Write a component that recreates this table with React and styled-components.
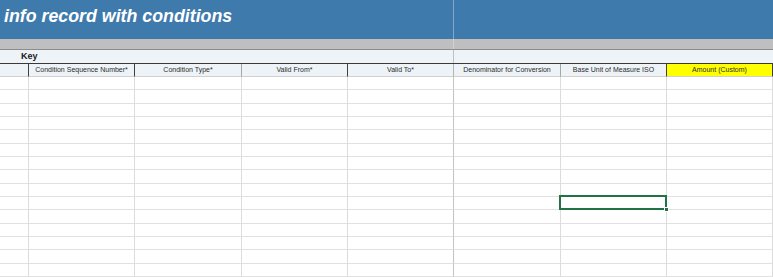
import React from "react";
import styled, { createGlobalStyle, css } from "styled-components";

const Global = createGlobalStyle`
  *, *::before, *::after { box-sizing: border-box; }
  html, body { margin: 0; padding: 0; background: #ffffff; }
  body { font-family: "Liberation Sans", Arial, sans-serif; }
`;

const COLS = "29px 106px 107px 106px 106px 107px 106px 106px";

const Sheet = styled.div`
  width: 773px;
  height: 277px;
  overflow: hidden;
  background: #ffffff;
`;

const Split = styled.div`
  display: grid;
  grid-template-columns: 454px 1fr;
  height: ${(p) => p.$h}px;
  background: ${(p) => p.$bg};
  border-bottom: ${(p) => (p.$bottom ? `1px solid ${p.$bottom}` : "none")};
`;

const Pane = styled.div`
  border-right: ${(p) => (p.$divider ? `1px solid ${p.$divider}` : "none")};
  min-width: 0;
  white-space: nowrap;
`;

const Title = styled.h1`
  margin: 0;
  padding: 6px 0 0 4px;
  font-family: "Liberation Sans", Arial, sans-serif;
  font-weight: 700;
  font-style: italic;
  font-size: 17.8px;
  line-height: 20px;
  color: #ffffff;
`;

const KeyLabel = styled.div`
  padding-left: 21px;
  font-size: 9px;
  font-weight: 700;
  line-height: 12px;
  color: #1a1a1a;
`;

const Row = styled.div`
  display: grid;
  grid-template-columns: ${COLS};
  height: ${(p) => p.$h}px;
`;

const borderFor = {
  dark: "#3f3f3f",
  mid: "#a6a6a6",
  freeze: "#b4b4b4",
};

const HeadCell = styled.div`
  height: 13px;
  border-right: 1px solid ${(p) => borderFor[p.$edge] || "#a6a6a6"};
  border-bottom: 1px solid #d0d0d0;
  background: ${(p) => (p.$highlight ? "#ffff00" : "#eef3f8")};
  font-size: 7px;
  line-height: 11px;
  color: #2b2b2b;
  text-align: center;
  white-space: nowrap;
  overflow: hidden;
`;

const HeaderRow = styled(Row)`
  border-top: 1px solid #3a3a3a;
`;

const Cell = styled.div`
  position: relative;
  border-right: 1px solid ${(p) => (p.$freeze ? "#c4c4c4" : "#dcdcdc")};
  border-bottom: 1px solid #e1e1e1;
  background: #ffffff;

  ${(p) =>
    p.$selected &&
    css`
      &::after {
        content: "";
        position: absolute;
        left: -2px;
        top: -2px;
        right: -1px;
        bottom: -1px;
        border: 2px solid #217346;
        pointer-events: none;
        z-index: 2;
      }
      &::before {
        content: "";
        position: absolute;
        right: -3px;
        bottom: -3px;
        width: 5px;
        height: 5px;
        background: #217346;
        border: 1px solid #ffffff;
        z-index: 3;
      }
    `}
`;

const Body = styled.div`
  display: grid;
  grid-template-rows: repeat(15, 13.3333px);
`;

const headers = [
  { label: "", edge: "dark" },
  { label: "Condition Sequence Number*", edge: "dark" },
  { label: "Condition Type*", edge: "mid" },
  { label: "Valid From*", edge: "dark" },
  { label: "Valid To*", edge: "freeze" },
  { label: "Denominator for Conversion", edge: "mid" },
  { label: "Base Unit of Measure ISO", edge: "dark" },
  { label: "Amount (Custom)", edge: "dark", highlight: true },
];

export default function App() {
  const rows = Array.from({ length: 15 }, (_, i) => i);
  return (
    <>
      <Global />
      <Sheet>
        <Split $h={39} $bg="#3f7aad">
          <Pane $divider="#86a8c8">
            <Title>info record with conditions</Title>
          </Pane>
          <Pane />
        </Split>
        <Split $h={11} $bg="#bfbfbf" $bottom="#8c8c8c">
          <Pane $divider="#d2d2d2" />
          <Pane />
        </Split>
        <Split $h={13} $bg="#eef3f8">
          <Pane $divider="#c0c0c0">
            <KeyLabel>Key</KeyLabel>
          </Pane>
          <Pane />
        </Split>
        <HeaderRow $h={14}>
          {headers.map((h, i) => (
            <HeadCell key={i} $edge={h.edge} $highlight={h.highlight}>
              {h.label}
            </HeadCell>
          ))}
        </HeaderRow>
        <Body>
          {rows.map((r) => (
            <Row key={r} $h={13.3333}>
              {headers.map((h, c) => (
                <Cell key={c} $freeze={c === 4} $selected={r === 9 && c === 6} />
              ))}
            </Row>
          ))}
        </Body>
      </Sheet>
    </>
  );
}
